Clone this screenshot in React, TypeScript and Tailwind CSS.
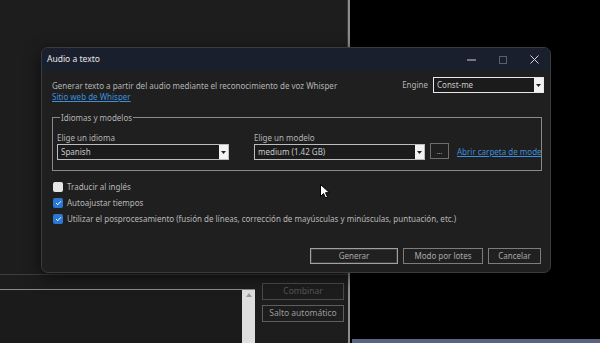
import React from 'react';

const font = "font-['Noto_Sans','Open_Sans',sans-serif]";

const Arrow = () => (
  <span className="flex w-[9px] items-center justify-center bg-[#f2f2f2]">
    <svg width="5" height="3" viewBox="0 0 5 3">
      <path d="M0 0h5L2.5 3z" fill="#222" />
    </svg>
  </span>
);

const Select = ({ value, width }: { value: string; width: string }) => (
  <div className={`flex h-[16px] shrink-0 border border-[#bdbdbd] bg-[#1b1b1b] ${width}`}>
    <span className="flex-1 truncate pl-[3px] leading-[14px] text-[#c9c9c9]">{value}</span>
    <Arrow />
  </div>
);

const Check = ({ checked, label }: { checked: boolean; label: string }) => (
  <div className="flex h-[16px] items-center gap-[4px] leading-[16px]">
    {checked ? (
      <span className="flex h-[10px] w-[10px] items-center justify-center rounded-[2px] bg-[#2a78d4]">
        <svg width="7" height="6" viewBox="0 0 7 6">
          <path d="M1 3l1.7 1.7L6 1.2" stroke="#fff" strokeWidth="1" fill="none" />
        </svg>
      </span>
    ) : (
      <span className="h-[10px] w-[10px] rounded-[2px] bg-[#e6e6e6]" />
    )}
    <span className="text-[#b8b8b8]">{label}</span>
  </div>
);

const Btn = ({ label, width, strong }: { label: string; width: string; strong?: boolean }) => (
  <div
    className={`flex h-[16px] items-center justify-center border bg-[#202020] text-[#a9a9a9] ${width} ${
      strong ? 'border-[#a0a0a0] shadow-[inset_0_0_0_1px_#3c3c3c]' : 'border-[#7c7c7c]'
    }`}
  >
    {label}
  </div>
);

export default function App() {
  return (
    <div className={`relative h-[343px] w-[600px] overflow-hidden bg-black text-[8px] ${font}`}>
      {/* background window */}
      <div className="absolute left-0 top-0 flex h-[343px] w-[350px] flex-col border-r-[2px] border-[#8c8c8c] bg-[#1d1d1d] text-[8.5px]">
        <div className="h-[274px] border-r border-[#3a3a3a]" />
        <div className="flex flex-1 border-t border-[#3e3e3e]">
          <div className="mt-[14px] flex w-[255px] border-t border-[#8a8a8a]">
            <div className="flex-1 bg-[#1b1b1b]" />
            <div className="flex w-[13px] flex-col items-center bg-[#dedede] pt-[3px]">
              <svg width="6" height="4" viewBox="0 0 6 4">
                <path d="M0 4h6L3 0z" fill="#9a9a9a" />
              </svg>
            </div>
          </div>
          <div className="ml-[7px] mt-[8px] flex flex-col gap-[5px]">
            <div className="flex h-[17px] w-[82px] items-center justify-center border border-[#4a4a4a] text-[#555]">
              Combinar
            </div>
            <div className="flex h-[17px] w-[82px] items-center justify-center border border-[#5e5e5e] text-[#9a9a9a]">
              Salto automático
            </div>
          </div>
        </div>
      </div>
      <div className="absolute bottom-0 left-[352px] h-[4px] w-[248px] bg-[#5c6381]" />

      {/* dialog */}
      <div className="absolute left-[41px] top-[47px] flex h-[226px] w-[510px] flex-col overflow-hidden rounded-[7px] border border-[#3b3b3b] bg-[#1f1f1f] shadow-[0_4px_16px_rgba(0,0,0,0.6)]">
        <div className="flex h-[23px] shrink-0 items-center bg-[#1a1f2e] pl-[5px]">
          <span className="flex-1 text-[8.5px] text-[#e6e6e6]">Audio a texto</span>
          <div className="flex items-center">
            <span className="flex w-[32px] justify-center">
              <svg width="9" height="2" viewBox="0 0 9 2">
                <path d="M0 1h9" stroke="#d0d0d0" strokeWidth="1" />
              </svg>
            </span>
            <span className="flex w-[31px] justify-center">
              <svg width="8" height="8" viewBox="0 0 8 8">
                <rect x="0.5" y="0.5" width="7" height="7" stroke="#5a5f6c" fill="none" />
              </svg>
            </span>
            <span className="flex w-[32px] justify-center">
              <svg width="9" height="9" viewBox="0 0 9 9">
                <path d="M0.5 0.5l8 8M8.5 0.5l-8 8" stroke="#d8d8d8" strokeWidth="1" />
              </svg>
            </span>
          </div>
        </div>

        <div className="flex min-w-0 flex-1 flex-col pl-[10px] pr-[8px] pt-[6px]">
          <div className="flex items-start">
            <div className="flex flex-1 flex-col pt-[3px] leading-[11px]">
              <span className="text-[#b4b4b4]">
                Generar texto a partir del audio mediante el reconocimiento de voz Whisper
              </span>
              <span className="text-[#3d8fdb] underline">Sitio web de Whisper</span>
            </div>
            <div className="-mr-[2px] flex items-center gap-[5px]">
              <span className="text-[#b4b4b4]">Engine</span>
              <div className="flex h-[16px] w-[111px] border border-[#e8e8e8] bg-[#1b1b1b]">
                <span className="flex-1 pl-[3px] leading-[14px] text-[#c9c9c9]">Const-me</span>
                <Arrow />
              </div>
            </div>
          </div>

          <fieldset className="mt-[10px] min-w-0 border border-[#8a8a8a] pb-[10px] pl-[4px] pt-[9px]">
            <legend className="ml-[3px] px-[1px] leading-[11px] text-[#b4b4b4]">Idiomas y modelos</legend>
            <div className="flex min-w-0 overflow-hidden">
              <div className="flex shrink-0 flex-col">
                <span className="leading-[11px] text-[#b4b4b4]">Elige un idioma</span>
                <div className="mt-[1px]">
                  <Select value="Spanish" width="w-[172px]" />
                </div>
              </div>
              <div className="ml-[25px] flex min-w-0 flex-col">
                <span className="leading-[11px] text-[#b4b4b4]">Elige un modelo</span>
                <div className="mt-[1px] flex items-start">
                  <Select value="medium (1.42 GB)" width="w-[171px]" />
                  <div className="-mt-[1px] ml-[5px] flex h-[16px] w-[19px] shrink-0 items-center justify-center border border-[#6e6e6e] text-[7px] leading-none text-[#b0b0b0]">
                    ...
                  </div>
                  <span className="ml-[8px] mt-[2px] whitespace-nowrap text-[#3d8fdb] underline">
                    Abrir carpeta de modelos
                  </span>
                </div>
              </div>
            </div>
          </fieldset>

          <div className="ml-[1px] mt-[8px] flex flex-col">
            <Check checked={false} label="Traducir al inglés" />
            <Check checked label="Autoajustar tiempos" />
            <Check
              checked
              label="Utilizar el posprocesamiento (fusión de líneas, corrección de mayúsculas y minúsculas, puntuación, etc.)"
            />
          </div>

          <div className="mt-[21px] flex justify-end gap-[5px] pr-[1px]">
            <Btn label="Generar" width="w-[88px]" strong />
            <Btn label="Modo por lotes" width="w-[80px]" />
            <Btn label="Cancelar" width="w-[53px]" />
          </div>
        </div>
      </div>

      {/* mouse cursor */}
      <svg className="absolute left-[320px] top-[184px]" width="10" height="15" viewBox="0 0 10 15">
        <path d="M0.5 0.5v12l3-3 2 4.5 2-1-2-4.3h4z" fill="#fff" stroke="#000" strokeWidth="1" />
      </svg>
    </div>
  );
}
